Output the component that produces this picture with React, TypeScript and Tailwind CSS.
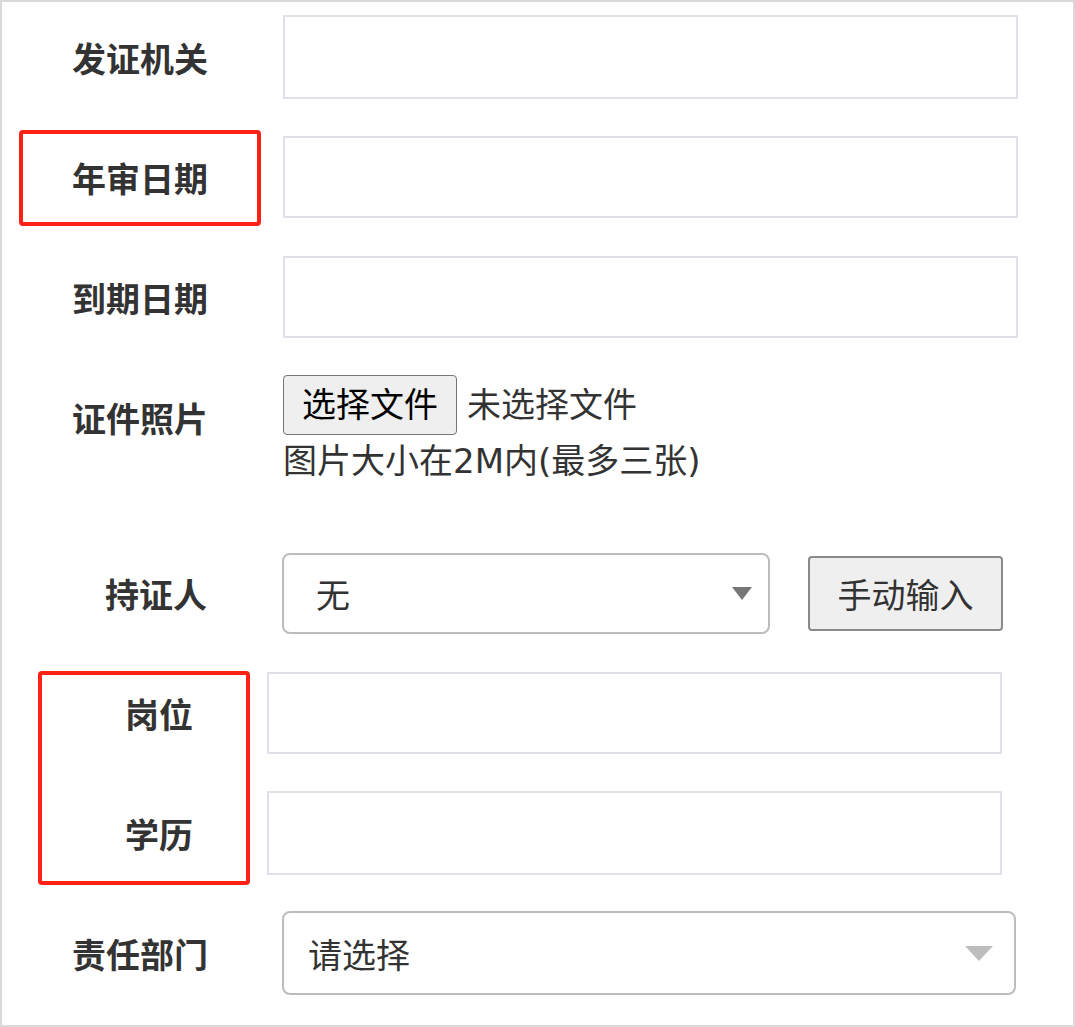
import React from 'react';

const font = { fontFamily: '"Noto Sans CJK SC", "Noto Sans", sans-serif' };
const bodyFont = { fontFamily: '"DejaVu Sans", "Noto Sans CJK SC", sans-serif' };

const TextInput: React.FC<{ className?: string }> = ({ className = '' }) => (
  <div className={`border-2 border-[#dfe1e8] bg-white ${className}`} />
);

const Arrow: React.FC<{ className: string }> = ({ className }) => (
  <span className={`block h-0 w-0 border-solid border-x-transparent ${className}`} />
);

const App: React.FC = () => {
  return (
    <div
      className="w-[1075px] h-[1027px] border-2 border-[#d9d9d9] bg-white text-[#333] overflow-hidden"
      style={font}
    >
      <div className="flex flex-col pt-[13px] pl-[17px]">
        {/* 发证机关 */}
        <div className="flex h-[84px] items-center">
          <div className="w-[242px] text-center text-[34px] font-bold">发证机关</div>
          <TextInput className="ml-[22px] w-[735px] h-full" />
        </div>

        {/* 年审日期 */}
        <div className="mt-[37px] flex h-[82px] items-center">
          <div className="relative w-[242px] text-center text-[34px] font-bold">
            年审日期
            <div className="absolute left-0 top-[-22px] h-[96px] w-[242px] rounded-[4px] border-[4px] border-[#ff2114]" />
          </div>
          <TextInput className="ml-[22px] w-[735px] h-full" />
        </div>

        {/* 到期日期 */}
        <div className="mt-[38px] flex h-[82px] items-center">
          <div className="w-[242px] text-center text-[34px] font-bold">到期日期</div>
          <TextInput className="ml-[22px] w-[735px] h-full" />
        </div>

        {/* 证件照片 */}
        <div className="mt-[37px] flex h-[178px] items-start">
          <div className="flex h-[84px] w-[242px] items-center justify-center text-[34px] font-bold">证件照片</div>
          <div className="ml-[22px] flex flex-col" style={bodyFont}>
            <div className="flex items-center">
              <div className="flex h-[60px] w-[174px] items-center justify-center rounded-[4px] border-[1.5px] border-[#767676] bg-[#efefef] text-[34px] text-black">
                选择文件
              </div>
              <span className="ml-[10px] text-[34px]">未选择文件</span>
            </div>
            <div className="mt-[4px] text-[34px] leading-[44px]">图片大小在2M内(最多三张)</div>
          </div>
        </div>

        {/* 持证人 */}
        <div className="flex h-[81px] items-center">
          <div className="w-[242px] pr-[54px] text-right text-[34px] font-bold">持证人</div>
          <div className="ml-[21px] flex h-full w-[488px] items-center justify-between rounded-[8px] border-2 border-[#bcbcbc] pl-[32px] pr-[16px]">
            <span className="text-[34px]">无</span>
            <Arrow className="border-x-[10px] border-t-[13px] border-t-[#777]" />
          </div>
          <div className="ml-[38px] flex h-[75px] w-[195px] items-center justify-center rounded-[4px] border-2 border-[#8a8a8a] bg-[#efefef] text-[34px]">
            手动输入
          </div>
        </div>

        {/* 岗位 / 学历 */}
        <div className="relative mt-[38px] flex flex-col">
          <div className="absolute left-[19px] top-[-1px] h-[214px] w-[212px] rounded-[4px] border-[4px] border-[#ff2114]" />
          <div className="flex h-[82px] items-center">
            <div className="w-[248px] pl-[106px] text-[34px] font-bold">岗位</div>
            <TextInput className="w-[735px] h-full" />
          </div>
          <div className="mt-[37px] flex h-[84px] items-center">
            <div className="w-[248px] pl-[106px] text-[34px] font-bold">学历</div>
            <TextInput className="w-[735px] h-full" />
          </div>
        </div>

        {/* 责任部门 */}
        <div className="mt-[36px] flex h-[84px] items-center">
          <div className="w-[242px] text-center text-[34px] font-bold">责任部门</div>
          <div className="ml-[21px] flex h-full w-[734px] items-center justify-between rounded-[8px] border-2 border-[#bcbcbc] pl-[24px] pr-[21px]">
            <span className="text-[34px]">请选择</span>
            <Arrow className="border-x-[14px] border-t-[15px] border-t-[#bdbdbd]" />
          </div>
        </div>
      </div>
    </div>
  );
};

export default App;
